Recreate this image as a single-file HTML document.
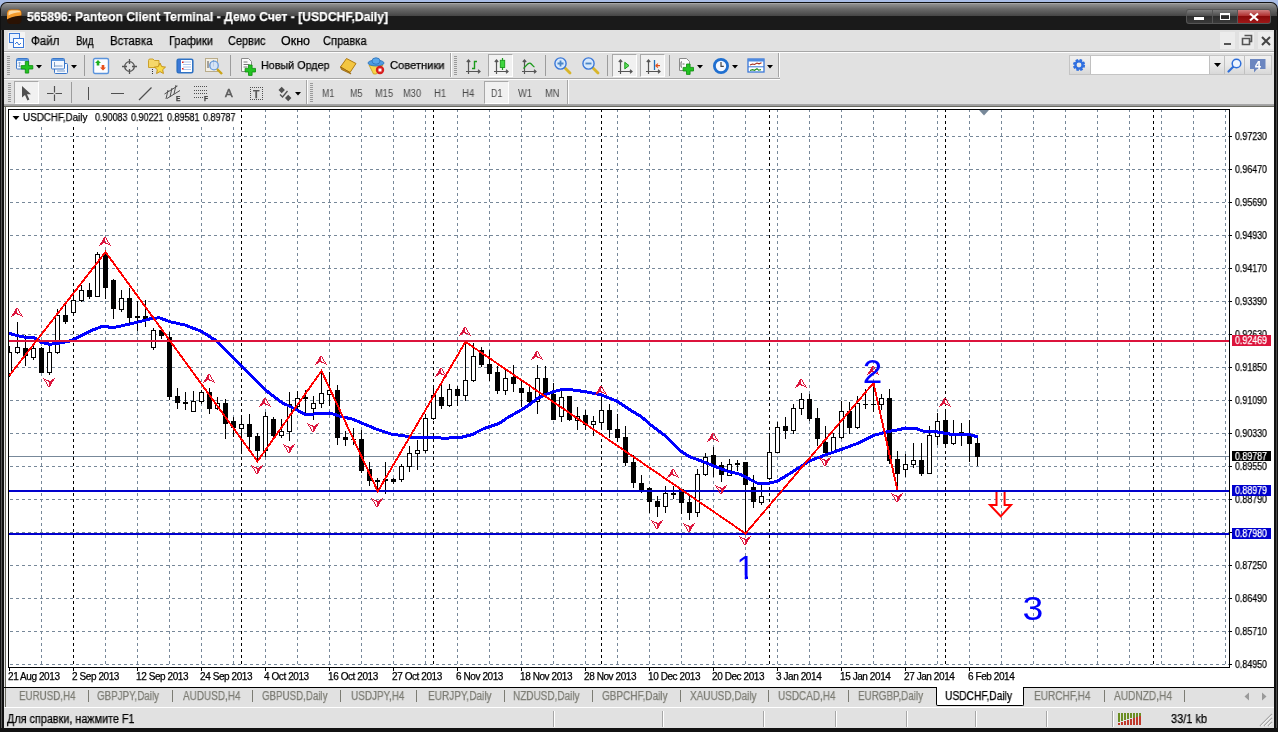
<!DOCTYPE html>
<html><head><meta charset="utf-8"><title>565896: Panteon Client Terminal</title>
<style>
html,body{margin:0;padding:0;background:#111;overflow:hidden}
#w{position:relative;width:1278px;height:732px;overflow:hidden;font-family:"Liberation Sans",sans-serif}
.b{position:absolute;display:block}
.t{position:absolute;white-space:pre;display:block;will-change:transform;-webkit-text-stroke:0.25px}
</style></head><body><div id="w">
<div class="b" style="left:0px;top:0px;width:1278px;height:732px;background:#a9bde6"></div>
<div class="b" style="left:0px;top:2px;width:1278px;height:730px;background:#111;border-radius:7px 7px 0 0"></div>
<div class="b" style="left:1px;top:3px;width:1276px;height:13px;background:linear-gradient(#b4b4b4,#8e8e8e 9%,#6a6a6a 45%,#454545);border-radius:6px 6px 0 0"></div>
<div class="b" style="left:1px;top:12px;width:1px;height:716px;background:#5a5a5a"></div>
<div class="b" style="left:1276px;top:12px;width:1px;height:716px;background:#4a4a4a"></div>
<div class="b" style="left:1px;top:16px;width:1276px;height:14px;background:#1a1a1a"></div>
<div class="b" style="left:4px;top:30px;width:1270px;height:698px;background:#e1e1e1"></div>
<span class="t" style="left:27.0px;top:8.1px;font-size:13px;line-height:17px;color:#fff;transform:scaleX(0.9352);transform-origin:0 50%;font-weight:bold;">565896: Panteon Client Terminal - Демо Счет - [USDCHF,Daily]</span>
<svg class="b" style="left:5px;top:8px" width="18" height="18" viewBox="0 0 18 18" ><path d="M2 5.5Q2 1.500 6 1.500H13Q16.500 1.500 16.500 5V12Q16.500 16 12.500 16H5.500Q2 16 2 12Z" fill="#2b1203"/><path d="M2 5.500Q2 1.500 6 1.500H13Q16.500 1.500 16.500 5V7.500C12 8,5 9,2 11.500Z" fill="#f59a2c"/><path d="M3.500 4.500Q4 2.500 6.500 2.500H12.500Q15 2.500 15.500 4.200C11 4.300,6 5.500,3.500 7.500Z" fill="#fcd9a5"/></svg>
<div class="b" style="left:1186px;top:9px;width:85px;height:15px;background:#555;border-radius:3px"></div>
<div class="b" style="left:1187px;top:10px;width:25px;height:13px;background:linear-gradient(#7c7c7c,#4c4c4c 45%,#2c2c2c 50%,#3a3a3a);border-radius:2px 0 0 2px"></div>
<div class="b" style="left:1213px;top:10px;width:24px;height:13px;background:linear-gradient(#7c7c7c,#4c4c4c 45%,#2c2c2c 50%,#3a3a3a)"></div>
<div class="b" style="left:1238px;top:10px;width:32px;height:13px;background:linear-gradient(#d08080,#b03030 45%,#8a0a0a 50%,#a01818);border-radius:0 2px 2px 0"></div>
<div class="b" style="left:1194px;top:17px;width:10px;height:3px;background:#fff"></div>
<div class="b" style="left:1220px;top:13px;width:10px;height:7px;border:1.5px solid #fff;border-top-width:2.5px;box-sizing:border-box"></div>
<svg class="b" style="left:1247px;top:12px" width="14" height="10" viewBox="0 0 14 10" ><path d="M3 1.5L11 8.5M11 1.5L3 8.5" stroke="#fff" stroke-width="2.2"/></svg>
<div class="b" style="left:4px;top:51px;width:1270px;height:1px;background:#a6a6a6"></div>
<div class="b" style="left:4px;top:52px;width:1270px;height:1px;background:#fdfdfd"></div>
<div class="b" style="left:8px;top:32px;width:17px;height:17px;background:#f4f4f4"></div>
<svg class="b" style="left:9px;top:33px" width="16" height="16" viewBox="0 0 16 16" ><rect x="0.5" y="0.5" width="10" height="9" fill="#eaf2ff" stroke="#3b78d8"/><rect x="4.5" y="5.5" width="10" height="9" fill="#fff" stroke="#3b78d8"/><path d="M6 11l2-2 2 3 2-2" stroke="#3b78d8" fill="none"/></svg>
<span class="t" style="left:31.0px;top:32.5px;font-size:12px;line-height:16px;color:#000;transform:scaleX(0.9661);transform-origin:0 50%;">Файл</span>
<span class="t" style="left:75.5px;top:32.5px;font-size:12px;line-height:16px;color:#000;transform:scaleX(0.8061);transform-origin:0 50%;">Вид</span>
<span class="t" style="left:110.0px;top:32.5px;font-size:12px;line-height:16px;color:#000;transform:scaleX(0.9528);transform-origin:0 50%;">Вставка</span>
<span class="t" style="left:168.5px;top:32.5px;font-size:12px;line-height:16px;color:#000;transform:scaleX(0.9224);transform-origin:0 50%;">Графики</span>
<span class="t" style="left:227.5px;top:32.5px;font-size:12px;line-height:16px;color:#000;transform:scaleX(0.9126);transform-origin:0 50%;">Сервис</span>
<span class="t" style="left:281.0px;top:32.5px;font-size:12px;line-height:16px;color:#000;transform:scaleX(1.0400);transform-origin:0 50%;">Окно</span>
<span class="t" style="left:322.5px;top:32.5px;font-size:12px;line-height:16px;color:#000;transform:scaleX(0.9241);transform-origin:0 50%;">Справка</span>
<div class="b" style="left:1220px;top:32px;width:15px;height:17px;background:#ececec"></div>
<div class="b" style="left:1239px;top:32px;width:15px;height:17px;background:#ececec"></div>
<div class="b" style="left:1258px;top:32px;width:15px;height:17px;background:#ececec"></div>
<div class="b" style="left:1224px;top:43px;width:7px;height:2px;background:#555"></div>
<svg class="b" style="left:1241px;top:34px" width="13" height="13" viewBox="0 0 13 13" ><path d="M3.5 1.5h7v6h-2M1.5 4.5h7v6h-7z" stroke="#555" stroke-width="1.6" fill="none"/></svg>
<svg class="b" style="left:1260px;top:35px" width="12" height="12" viewBox="0 0 12 12" ><path d="M2 2L10 10M10 2L2 10" stroke="#444" stroke-width="2"/></svg>
<div class="b" style="left:4px;top:78px;width:776px;height:1px;background:#a6a6a6"></div>
<div class="b" style="left:4px;top:79px;width:776px;height:1px;background:#fdfdfd"></div>
<div class="b" style="left:7px;top:56px;width:3px;height:1px;background:#9a9a9a"></div>
<div class="b" style="left:7px;top:58px;width:3px;height:1px;background:#9a9a9a"></div>
<div class="b" style="left:7px;top:60px;width:3px;height:1px;background:#9a9a9a"></div>
<div class="b" style="left:7px;top:62px;width:3px;height:1px;background:#9a9a9a"></div>
<div class="b" style="left:7px;top:64px;width:3px;height:1px;background:#9a9a9a"></div>
<div class="b" style="left:7px;top:66px;width:3px;height:1px;background:#9a9a9a"></div>
<div class="b" style="left:7px;top:68px;width:3px;height:1px;background:#9a9a9a"></div>
<div class="b" style="left:7px;top:70px;width:3px;height:1px;background:#9a9a9a"></div>
<div class="b" style="left:7px;top:72px;width:3px;height:1px;background:#9a9a9a"></div>
<div class="b" style="left:7px;top:74px;width:3px;height:1px;background:#9a9a9a"></div>
<svg class="b" style="left:15px;top:57px" width="20" height="18" viewBox="0 0 20 18" ><rect x="1.5" y="1.5" width="12" height="10.5" rx="1" fill="#f4f8ff" stroke="#3a77c9"/><rect x="2" y="2" width="11" height="2" fill="#5c97e0"/><path d="M4.5 5v5M3 6.5l1.5-1.5 1.5 1.5M3 8.5l1.5 1.5 1.5-1.5" stroke="#7a9cc8" fill="none" stroke-width=".8"/><path d="M10.300 4.500h3.400v4.100h4.100v3.400h-4.100v4.100h-3.400v-4.100H6.200v-3.400h4.100z" fill="#22c322" stroke="#0b8a0b" stroke-width=".8"/></svg>
<svg class="b" style="left:36px;top:65px" width="6" height="4" viewBox="0 0 6 4" ><path d="M0 0H6L3 3.5Z" fill="#000"/></svg>
<svg class="b" style="left:50px;top:57px" width="20" height="18" viewBox="0 0 20 18" ><rect x="4.5" y="6.5" width="13" height="10" rx="1" fill="#f4f8ff" stroke="#3a77c9"/><path d="M7 14h8" stroke="#7a9cc8" stroke-width="1"/><rect x="1.5" y="1.5" width="13" height="10.5" rx="1" fill="#f4f8ff" stroke="#3a77c9"/><rect x="2" y="2" width="12" height="2" fill="#5c97e0"/><path d="M4.500 5v5M4.500 9h8" stroke="#7a9cc8" fill="none" stroke-width="1"/></svg>
<svg class="b" style="left:71px;top:65px" width="6" height="4" viewBox="0 0 6 4" ><path d="M0 0H6L3 3.5Z" fill="#000"/></svg>
<div class="b" style="left:84px;top:55px;width:1px;height:21px;background:#9c9c9c"></div>
<svg class="b" style="left:92px;top:57px" width="18" height="18" viewBox="0 0 18 18" ><rect x="1.5" y="1.5" width="15" height="15" rx="1.5" fill="#fcfdff" stroke="#5a93dc" stroke-width="1.4"/><path d="M6 3l3 3H7.3v2.5H4.7V6H3z" fill="#1fb01f"/><path d="M11 13.5l-3-3h1.7V8h2.6v2.5H14z" fill="#e8501a"/></svg>
<svg class="b" style="left:121px;top:58px" width="18" height="18" viewBox="0 0 18 18" ><circle cx="8.5" cy="8.5" r="4.8" fill="none" stroke="#555" stroke-width="1.3"/><path d="M8.5 1v5M8.5 11v5M1 8.5h5M11 8.5h5" stroke="#555" stroke-width="1.3"/></svg>
<svg class="b" style="left:147px;top:56px" width="20" height="20" viewBox="0 0 20 20" ><path d="M1.5 4.5q0-1.5 1.5-1.5h3l1.5 1.5h4.5v7h-10.5z" fill="#f5d76a" stroke="#c79a1d" stroke-width=".9"/><path d="M13 7l1.7 3.6 3.8.5-2.8 2.6.7 3.8-3.4-1.9-3.4 1.9.7-3.8-2.8-2.6 3.8-.5z" fill="#f9dc4a" stroke="#c08a10" stroke-width=".9"/><path d="M5.5 13v5" stroke="#333" stroke-dasharray="1 1"/></svg>
<svg class="b" style="left:176px;top:58px" width="18" height="17" viewBox="0 0 18 17" ><rect x="1.2" y="1.2" width="15.6" height="13.6" rx="1.5" fill="#fff" stroke="#2f72c4" stroke-width="1.6"/><rect x="2" y="2" width="3" height="12" fill="#3b78d8"/><path d="M7 4h8M7 6.5h8M7 9h8M7 11.500h8" stroke="#9bb8e8" stroke-width=".8"/><rect x="6" y="3.500" width="1.500" height="1.500" fill="#e02020"/><rect x="6" y="10" width="1.500" height="1.500" fill="#e02020"/></svg>
<svg class="b" style="left:204px;top:57px" width="20" height="19" viewBox="0 0 20 19" ><rect x="1.5" y="1.5" width="12" height="13" fill="#f3efe4" stroke="#b9ac8a"/><path d="M4 4v7M6.500 5v6M9.500 3.500v6" stroke="#555" stroke-width="1"/><circle cx="10" cy="8.500" r="4.300" fill="#cfe2fa" fill-opacity=".85" stroke="#6d9fdf" stroke-width="1.300"/><path d="M13 12l5 5" stroke="#caa41a" stroke-width="2.400"/></svg>
<div class="b" style="left:230px;top:55px;width:1px;height:21px;background:#9c9c9c"></div>
<svg class="b" style="left:239px;top:57px" width="19" height="19" viewBox="0 0 19 19" ><path d="M2.500 1.500h7l3 3v10h-10z" fill="#fbfbfb" stroke="#8a8a8a"/><path d="M4.500 5h4M4.500 7.500h6M4.500 10h4" stroke="#777" stroke-width="1"/><path d="M9.500 8h3.600v3.400h3.400v3.600h-3.400v3.400H9.500V15H6.100v-3.600h3.400z" fill="#22c322" stroke="#0b8a0b" stroke-width=".8"/></svg>
<span class="t" style="left:260.5px;top:58.2px;font-size:11.5px;line-height:15.5px;color:#000;transform:scaleX(0.9349);transform-origin:0 50%;">Новый Ордер</span>
<svg class="b" style="left:339px;top:57px" width="19" height="18" viewBox="0 0 19 18" ><path d="M1.500 10l6-8.500 9.500 5-6 9z" fill="#f3c641" stroke="#b07a10" stroke-width="1"/><path d="M1.500 10l1 2.500 9.500 4.500-1-1.500z" fill="#c98f1c" stroke="#8a5a08" stroke-width=".7"/></svg>
<svg class="b" style="left:366px;top:56px" width="20" height="20" viewBox="0 0 20 20" ><path d="M3 9h14l-6.500 9h-3z" fill="#f6d44a" stroke="#c79a1d" stroke-width=".8"/><ellipse cx="10" cy="7" rx="8" ry="3" fill="#4d9be0" stroke="#2a6fb8" stroke-width=".8"/><ellipse cx="10" cy="5" rx="4" ry="3.200" fill="#5aa7ea" stroke="#2a6fb8" stroke-width=".8"/><circle cx="14" cy="14" r="4.200" fill="#d81e1e"/><rect x="12.500" y="12.500" width="3" height="3" fill="#fff"/></svg>
<span class="t" style="left:390.0px;top:58.2px;font-size:11.5px;line-height:15.5px;color:#000;transform:scaleX(0.9699);transform-origin:0 50%;">Советники</span>
<div class="b" style="left:450px;top:53px;width:1px;height:24px;background:#a6a6a6"></div>
<div class="b" style="left:451px;top:53px;width:1px;height:24px;background:#fdfdfd"></div>
<div class="b" style="left:454px;top:56px;width:3px;height:1px;background:#9a9a9a"></div>
<div class="b" style="left:454px;top:58px;width:3px;height:1px;background:#9a9a9a"></div>
<div class="b" style="left:454px;top:60px;width:3px;height:1px;background:#9a9a9a"></div>
<div class="b" style="left:454px;top:62px;width:3px;height:1px;background:#9a9a9a"></div>
<div class="b" style="left:454px;top:64px;width:3px;height:1px;background:#9a9a9a"></div>
<div class="b" style="left:454px;top:66px;width:3px;height:1px;background:#9a9a9a"></div>
<div class="b" style="left:454px;top:68px;width:3px;height:1px;background:#9a9a9a"></div>
<div class="b" style="left:454px;top:70px;width:3px;height:1px;background:#9a9a9a"></div>
<div class="b" style="left:454px;top:72px;width:3px;height:1px;background:#9a9a9a"></div>
<div class="b" style="left:454px;top:74px;width:3px;height:1px;background:#9a9a9a"></div>
<svg class="b" style="left:465px;top:58px" width="17" height="17" viewBox="0 0 17 17" ><path d="M3.500 2v14M1 13.500h14M1.800 4l1.700-2 1.700 2M13 11.800l2 1.700-2 1.700" stroke="#555" stroke-width="1.200" fill="none"/><path d="M7 10.500h2.500v-7H12" stroke="#1a9a1a" stroke-width="1.400" fill="none"/></svg>
<div class="b" style="left:488px;top:54px;width:25px;height:23px;background:#f1f1f1;box-sizing:border-box;border:1px solid;border-color:#a8a8a8 #fff #fff #a8a8a8"></div>
<svg class="b" style="left:493px;top:58px" width="17" height="17" viewBox="0 0 17 17" ><path d="M3.500 2v14M1 13.500h14M1.800 4l1.700-2 1.700 2M13 11.800l2 1.700-2 1.700" stroke="#555" stroke-width="1.200" fill="none"/><path d="M9.500 0v12" stroke="#1a9a1a" stroke-width="1.200"/><rect x="7.300" y="2.300" width="4.400" height="7.200" fill="#3fd63f" stroke="#1a9a1a" stroke-width=".9"/></svg>
<svg class="b" style="left:521px;top:58px" width="17" height="17" viewBox="0 0 17 17" ><path d="M3.500 2v14M1 13.500h14M1.800 4l1.700-2 1.700 2M13 11.800l2 1.700-2 1.700" stroke="#555" stroke-width="1.200" fill="none"/><path d="M2.500 10.500C5 8,7 4.500,9 5.200S12 8.500,13.500 9" stroke="#1a9a1a" stroke-width="1.300" fill="none"/></svg>
<div class="b" style="left:545px;top:55px;width:1px;height:21px;background:#9c9c9c"></div>
<svg class="b" style="left:551.5px;top:55px" width="20" height="20" viewBox="0 0 20 20" ><path d="M12.500 12.500l5.500 5.500" stroke="#d8b52a" stroke-width="2.800" stroke-linecap="round"/><circle cx="8.500" cy="8.500" r="5.600" fill="#d6e8fb" stroke="#3b78d8" stroke-width="1.400"/><path d="M5.500 8.500h6M8.500 5.500v6" stroke="#4a86c8" stroke-width="1.800"/></svg>
<svg class="b" style="left:579.7px;top:55px" width="20" height="20" viewBox="0 0 20 20" ><path d="M12.500 12.500l5.500 5.500" stroke="#d8b52a" stroke-width="2.800" stroke-linecap="round"/><circle cx="8.500" cy="8.500" r="5.600" fill="#d6e8fb" stroke="#3b78d8" stroke-width="1.400"/><path d="M5.500 8.500h6" stroke="#4a86c8" stroke-width="1.800"/></svg>
<div class="b" style="left:607px;top:55px;width:1px;height:21px;background:#9c9c9c"></div>
<div class="b" style="left:612px;top:54px;width:25px;height:23px;background:#f1f1f1;box-sizing:border-box;border:1px solid;border-color:#a8a8a8 #fff #fff #a8a8a8"></div>
<svg class="b" style="left:617px;top:58px" width="17" height="17" viewBox="0 0 17 17" ><path d="M3.500 2v14M1 13.500h14M1.800 4l1.700-2 1.700 2M13 11.800l2 1.700-2 1.700" stroke="#555" stroke-width="1.200" fill="none"/><path d="M7.800 4.300v6.600l4.200-3.300z" fill="#5fe05f" stroke="#1a9a1a" stroke-width="1"/></svg>
<div class="b" style="left:640px;top:54px;width:25px;height:23px;background:#f1f1f1;box-sizing:border-box;border:1px solid;border-color:#a8a8a8 #fff #fff #a8a8a8"></div>
<svg class="b" style="left:645px;top:58px" width="17" height="17" viewBox="0 0 17 17" ><path d="M3.500 2v14M1 13.500h14M1.800 4l1.700-2 1.700 2M13 11.800l2 1.700-2 1.700" stroke="#555" stroke-width="1.200" fill="none"/><path d="M9.500 2v10" stroke="#1f6fb8" stroke-width="1.300"/><path d="M10.500 7.600h4.500M10.500 7.600l2.500-2M10.500 7.600l2.500 2" stroke="#e0501a" stroke-width="1.200" fill="none"/></svg>
<div class="b" style="left:669px;top:55px;width:1px;height:21px;background:#9c9c9c"></div>
<svg class="b" style="left:678px;top:57px" width="19" height="20" viewBox="0 0 19 20" ><path d="M1.500 1.500h7l3 3v9h-10z" fill="#fbfbfb" stroke="#8a8a8a"/><path d="M4 4.500q-1 0-1 1.500v3q0 1.500 1 1.500M4.500 7h2" stroke="#555" fill="none" stroke-width=".9"/><path d="M8.500 7h3.600v3.400h3.400v3.600h-3.400v3.400H8.500V14H5.100v-3.600h3.400z" fill="#22c322" stroke="#0b8a0b" stroke-width=".8"/></svg>
<svg class="b" style="left:697px;top:65px" width="6" height="4" viewBox="0 0 6 4" ><path d="M0 0H6L3 3.5Z" fill="#000"/></svg>
<svg class="b" style="left:712px;top:57px" width="18" height="18" viewBox="0 0 18 18" ><circle cx="9" cy="9" r="6.600" fill="#f4f8ff" stroke="#1f6fd0" stroke-width="2.800"/><path d="M9 5V9.300h2.800" stroke="#444" stroke-width="1.200" fill="none"/></svg>
<svg class="b" style="left:732px;top:65px" width="6" height="4" viewBox="0 0 6 4" ><path d="M0 0H6L3 3.5Z" fill="#000"/></svg>
<svg class="b" style="left:747px;top:58px" width="18" height="15" viewBox="0 0 18 15" ><rect x="1" y="1" width="16" height="13" fill="#fff" stroke="#3b78d8" stroke-width="1.300"/><rect x="1" y="1" width="16" height="2.500" fill="#4d8ae0"/><path d="M1 8.800h16" stroke="#3b78d8" stroke-width="1"/><path d="M3 7l2.500-1 2 .5 2.500-1.500 2 .8 2.500-1" stroke="#a52a1a" fill="none" stroke-width="1.100"/><path d="M3 12.500l2.500-.8 2 .6 2.500-1.600 1.500 1.500 2.500-.6" stroke="#1a8a1a" fill="none" stroke-width="1.100"/></svg>
<svg class="b" style="left:767px;top:65px" width="6" height="4" viewBox="0 0 6 4" ><path d="M0 0H6L3 3.5Z" fill="#000"/></svg>
<div class="b" style="left:778px;top:53px;width:1px;height:24px;background:#a6a6a6"></div>
<div class="b" style="left:779px;top:53px;width:1px;height:24px;background:#fdfdfd"></div>
<div class="b" style="left:1069px;top:55px;width:203px;height:20px;background:linear-gradient(#f0f0f0,#e9e9e9 50%,#d8d8d8);border:1px solid #c4c4c4;box-sizing:border-box"></div>
<div class="b" style="left:1090px;top:56px;width:120px;height:18px;background:#fff;border-left:1px solid #c0c0c0;border-right:1px solid #c0c0c0;box-sizing:border-box"></div>
<svg class="b" style="left:1071px;top:57px" width="16" height="16" viewBox="0 0 16 16" ><circle cx="8" cy="8" r="4.600" fill="none" stroke="#2f6fe0" stroke-width="3" stroke-dasharray="2.300 1.310"/><circle cx="8" cy="8" r="3.600" fill="none" stroke="#2f6fe0" stroke-width="2.400"/></svg>
<div class="b" style="left:1224px;top:56px;width:1px;height:18px;background:#c0c0c0"></div>
<div class="b" style="left:1244px;top:56px;width:1px;height:18px;background:#c0c0c0"></div>
<svg class="b" style="left:1214px;top:63px" width="8" height="5" viewBox="0 0 8 5" ><path d="M0 0H7L3.500 4Z" fill="#000"/></svg>
<svg class="b" style="left:1226px;top:57px" width="17" height="17" viewBox="0 0 17 17" ><path d="M2.500 14.500l5-5" stroke="#2f6fd8" stroke-width="2.200" stroke-linecap="round"/><circle cx="10.500" cy="6.500" r="4.300" fill="#eef5ff" stroke="#2f6fd8" stroke-width="1.500"/></svg>
<svg class="b" style="left:1249px;top:58px" width="18" height="15" viewBox="0 0 18 15" ><path d="M1 1h15.500v10H8l-3 3.500V11H1z" fill="#6b86c0"/></svg>
<span class="t" style="left:1254.6px;top:57.5px;font-size:10.5px;line-height:14.5px;color:#fff;font-weight:bold;">4</span>
<div class="b" style="left:4px;top:104px;width:1270px;height:1px;background:#a6a6a6"></div>
<div class="b" style="left:8px;top:83px;width:3px;height:1px;background:#9a9a9a"></div>
<div class="b" style="left:8px;top:85px;width:3px;height:1px;background:#9a9a9a"></div>
<div class="b" style="left:8px;top:87px;width:3px;height:1px;background:#9a9a9a"></div>
<div class="b" style="left:8px;top:89px;width:3px;height:1px;background:#9a9a9a"></div>
<div class="b" style="left:8px;top:91px;width:3px;height:1px;background:#9a9a9a"></div>
<div class="b" style="left:8px;top:93px;width:3px;height:1px;background:#9a9a9a"></div>
<div class="b" style="left:8px;top:95px;width:3px;height:1px;background:#9a9a9a"></div>
<div class="b" style="left:8px;top:97px;width:3px;height:1px;background:#9a9a9a"></div>
<div class="b" style="left:8px;top:99px;width:3px;height:1px;background:#9a9a9a"></div>
<div class="b" style="left:8px;top:101px;width:3px;height:1px;background:#9a9a9a"></div>
<div class="b" style="left:14px;top:81px;width:25px;height:23px;background:#f1f1f1;box-sizing:border-box;border:1px solid;border-color:#a8a8a8 #fff #fff #a8a8a8"></div>
<svg class="b" style="left:20px;top:85px" width="12" height="17" viewBox="0 0 12 17" ><path d="M2 1v11.500l3-2.600 2.400 5.600 2-0.900-2.400-5.400h4z" fill="#505050"/></svg>
<svg class="b" style="left:46px;top:85px" width="17" height="17" viewBox="0 0 17 17" ><path d="M8.500 1v6.500M8.500 9.500v6.500M1 8.500h6.500M9.500 8.500h6.500" stroke="#505050" stroke-width="1.200"/></svg>
<div class="b" style="left:71px;top:82px;width:1px;height:21px;background:#9c9c9c"></div>
<div class="b" style="left:88px;top:87px;width:1px;height:13px;background:#505050"></div>
<div class="b" style="left:111px;top:93px;width:13px;height:1px;background:#505050"></div>
<svg class="b" style="left:137px;top:86px" width="16" height="16" viewBox="0 0 16 16" ><path d="M2 14L14.500 1.500" stroke="#505050" stroke-width="1.200"/></svg>
<svg class="b" style="left:163px;top:84px" width="19" height="19" viewBox="0 0 19 19" ><path d="M1.500 10l13-8M4 14.500l13-8M3 15l2-9M7 13l2-9M11 10l2-9" stroke="#505050" stroke-width="1" fill="none"/></svg>
<span class="t" style="left:175.6px;top:94.2px;font-size:6.5px;line-height:10.5px;color:#404040;font-weight:bold;">E</span>
<div class="b" style="left:194px;top:86px;width:14px;height:1px;background:repeating-linear-gradient(90deg,#505050 0 1px,transparent 1px 2px)"></div>
<div class="b" style="left:194px;top:90px;width:14px;height:1px;background:repeating-linear-gradient(90deg,#505050 0 1px,transparent 1px 2px)"></div>
<div class="b" style="left:194px;top:93px;width:14px;height:1px;background:repeating-linear-gradient(90deg,#505050 0 1px,transparent 1px 2px)"></div>
<div class="b" style="left:194px;top:97px;width:9px;height:1px;background:repeating-linear-gradient(90deg,#505050 0 1px,transparent 1px 2px)"></div>
<span class="t" style="left:203.8px;top:94.2px;font-size:6.5px;line-height:10.5px;color:#404040;font-weight:bold;">F</span>
<span class="t" style="left:224.8px;top:85.8px;font-size:11.5px;line-height:15.5px;color:#5a5a5a;-webkit-text-stroke:0.5px;">A</span>
<div class="b" style="left:250px;top:87px;width:13px;height:13px;border:1px dotted #505050;box-sizing:border-box"></div>
<span class="t" style="left:252.8px;top:86.5px;font-size:10.5px;line-height:14.5px;color:#5a5a5a;font-weight:bold;">T</span>
<svg class="b" style="left:277px;top:86px" width="16" height="16" viewBox="0 0 16 16" ><path d="M1.500 4l3.200-3.200L7.900 4 4.700 7.200zM8 12l3.200-3.200L14.400 12l-3.200 3.200z" fill="#505050"/><path d="M3 8.500l2.500 2.500 5-6" stroke="#505050" stroke-width="1.300" fill="none"/></svg>
<svg class="b" style="left:294.5px;top:92px" width="6" height="4" viewBox="0 0 6 4" ><path d="M0 0H6L3 3.5Z" fill="#000"/></svg>
<div class="b" style="left:306px;top:80px;width:1px;height:24px;background:#a6a6a6"></div>
<div class="b" style="left:307px;top:80px;width:1px;height:24px;background:#fdfdfd"></div>
<div class="b" style="left:310px;top:83px;width:3px;height:1px;background:#9a9a9a"></div>
<div class="b" style="left:310px;top:85px;width:3px;height:1px;background:#9a9a9a"></div>
<div class="b" style="left:310px;top:87px;width:3px;height:1px;background:#9a9a9a"></div>
<div class="b" style="left:310px;top:89px;width:3px;height:1px;background:#9a9a9a"></div>
<div class="b" style="left:310px;top:91px;width:3px;height:1px;background:#9a9a9a"></div>
<div class="b" style="left:310px;top:93px;width:3px;height:1px;background:#9a9a9a"></div>
<div class="b" style="left:310px;top:95px;width:3px;height:1px;background:#9a9a9a"></div>
<div class="b" style="left:310px;top:97px;width:3px;height:1px;background:#9a9a9a"></div>
<div class="b" style="left:310px;top:99px;width:3px;height:1px;background:#9a9a9a"></div>
<div class="b" style="left:310px;top:101px;width:3px;height:1px;background:#9a9a9a"></div>
<div class="b" style="left:484px;top:81px;width:25px;height:23px;background:#f1f1f1;box-sizing:border-box;border:1px solid;border-color:#a8a8a8 #fff #fff #a8a8a8"></div>
<span class="t" style="left:321.7px;top:86.6px;font-size:10px;line-height:14px;color:#484848;transform:scaleX(0.8855);transform-origin:0 50%;-webkit-text-stroke:0;">M1</span>
<span class="t" style="left:349.5px;top:86.6px;font-size:10px;line-height:14px;color:#484848;transform:scaleX(0.8999);transform-origin:0 50%;-webkit-text-stroke:0;">M5</span>
<span class="t" style="left:375.0px;top:86.6px;font-size:10px;line-height:14px;color:#484848;transform:scaleX(0.9254);transform-origin:0 50%;-webkit-text-stroke:0;">M15</span>
<span class="t" style="left:403.0px;top:86.6px;font-size:10px;line-height:14px;color:#484848;transform:scaleX(0.9254);transform-origin:0 50%;-webkit-text-stroke:0;">M30</span>
<span class="t" style="left:434.0px;top:86.6px;font-size:10px;line-height:14px;color:#484848;transform:scaleX(0.9388);transform-origin:0 50%;-webkit-text-stroke:0;">H1</span>
<span class="t" style="left:461.6px;top:86.6px;font-size:10px;line-height:14px;color:#484848;transform:scaleX(0.9544);transform-origin:0 50%;-webkit-text-stroke:0;">H4</span>
<span class="t" style="left:490.7px;top:86.6px;font-size:10px;line-height:14px;color:#484848;transform:scaleX(0.8840);transform-origin:0 50%;-webkit-text-stroke:0;">D1</span>
<span class="t" style="left:518.0px;top:86.6px;font-size:10px;line-height:14px;color:#484848;transform:scaleX(0.9333);transform-origin:0 50%;-webkit-text-stroke:0;">W1</span>
<span class="t" style="left:544.7px;top:86.6px;font-size:10px;line-height:14px;color:#484848;transform:scaleX(0.9324);transform-origin:0 50%;-webkit-text-stroke:0;">MN</span>
<div class="b" style="left:567px;top:80px;width:1px;height:24px;background:#a6a6a6"></div>
<div class="b" style="left:568px;top:80px;width:1px;height:24px;background:#fdfdfd"></div>
<div class="b" style="left:4px;top:105px;width:1270px;height:1px;background:#a0a0a0"></div>
<div class="b" style="left:4px;top:106px;width:1270px;height:1px;background:#696960"></div>
<div class="b" style="left:5px;top:107px;width:1269px;height:580px;background:#fff"></div>
<div class="b" style="left:5px;top:107px;width:1px;height:580px;background:#696960"></div>
<svg class="b" style="left:0;top:0" width="1278" height="732" viewBox="0 0 1278 732"><defs><clipPath id="cc"><rect x="9" y="110" width="1220" height="557"/></clipPath></defs><g clip-path="url(#cc)"><g shape-rendering="crispEdges"><path d="M10 136.5H1229" stroke="#778899" stroke-dasharray="3 3" fill="none"/><path d="M10 169.5H1229" stroke="#778899" stroke-dasharray="3 3" fill="none"/><path d="M10 202.5H1229" stroke="#778899" stroke-dasharray="3 3" fill="none"/><path d="M10 235.5H1229" stroke="#778899" stroke-dasharray="3 3" fill="none"/><path d="M10 268.5H1229" stroke="#778899" stroke-dasharray="3 3" fill="none"/><path d="M10 301.5H1229" stroke="#778899" stroke-dasharray="3 3" fill="none"/><path d="M10 334.5H1229" stroke="#778899" stroke-dasharray="3 3" fill="none"/><path d="M10 367.5H1229" stroke="#778899" stroke-dasharray="3 3" fill="none"/><path d="M10 400.5H1229" stroke="#778899" stroke-dasharray="3 3" fill="none"/><path d="M10 433.5H1229" stroke="#778899" stroke-dasharray="3 3" fill="none"/><path d="M10 466.5H1229" stroke="#778899" stroke-dasharray="3 3" fill="none"/><path d="M10 499.5H1229" stroke="#778899" stroke-dasharray="3 3" fill="none"/><path d="M10 532.5H1229" stroke="#778899" stroke-dasharray="3 3" fill="none"/><path d="M10 565.5H1229" stroke="#778899" stroke-dasharray="3 3" fill="none"/><path d="M10 598.5H1229" stroke="#778899" stroke-dasharray="3 3" fill="none"/><path d="M10 631.5H1229" stroke="#778899" stroke-dasharray="3 3" fill="none"/><path d="M10 664.5H1229" stroke="#778899" stroke-dasharray="3 3" fill="none"/><path d="M41.5 109V667" stroke="#778899" stroke-dasharray="3 3" fill="none"/><path d="M105.5 109V667" stroke="#778899" stroke-dasharray="3 3" fill="none"/><path d="M137.5 109V667" stroke="#778899" stroke-dasharray="3 3" fill="none"/><path d="M169.5 109V667" stroke="#778899" stroke-dasharray="3 3" fill="none"/><path d="M201.5 109V667" stroke="#778899" stroke-dasharray="3 3" fill="none"/><path d="M233.5 109V667" stroke="#778899" stroke-dasharray="3 3" fill="none"/><path d="M265.5 109V667" stroke="#778899" stroke-dasharray="3 3" fill="none"/><path d="M297.5 109V667" stroke="#778899" stroke-dasharray="3 3" fill="none"/><path d="M329.5 109V667" stroke="#778899" stroke-dasharray="3 3" fill="none"/><path d="M361.5 109V667" stroke="#778899" stroke-dasharray="3 3" fill="none"/><path d="M393.5 109V667" stroke="#778899" stroke-dasharray="3 3" fill="none"/><path d="M425.5 109V667" stroke="#778899" stroke-dasharray="3 3" fill="none"/><path d="M457.5 109V667" stroke="#778899" stroke-dasharray="3 3" fill="none"/><path d="M489.5 109V667" stroke="#778899" stroke-dasharray="3 3" fill="none"/><path d="M521.5 109V667" stroke="#778899" stroke-dasharray="3 3" fill="none"/><path d="M553.5 109V667" stroke="#778899" stroke-dasharray="3 3" fill="none"/><path d="M585.5 109V667" stroke="#778899" stroke-dasharray="3 3" fill="none"/><path d="M617.5 109V667" stroke="#778899" stroke-dasharray="3 3" fill="none"/><path d="M649.5 109V667" stroke="#778899" stroke-dasharray="3 3" fill="none"/><path d="M681.5 109V667" stroke="#778899" stroke-dasharray="3 3" fill="none"/><path d="M713.5 109V667" stroke="#778899" stroke-dasharray="3 3" fill="none"/><path d="M745.5 109V667" stroke="#778899" stroke-dasharray="3 3" fill="none"/><path d="M777.5 109V667" stroke="#778899" stroke-dasharray="3 3" fill="none"/><path d="M809.5 109V667" stroke="#778899" stroke-dasharray="3 3" fill="none"/><path d="M841.5 109V667" stroke="#778899" stroke-dasharray="3 3" fill="none"/><path d="M873.5 109V667" stroke="#778899" stroke-dasharray="3 3" fill="none"/><path d="M905.5 109V667" stroke="#778899" stroke-dasharray="3 3" fill="none"/><path d="M937.5 109V667" stroke="#778899" stroke-dasharray="3 3" fill="none"/><path d="M969.5 109V667" stroke="#778899" stroke-dasharray="3 3" fill="none"/><path d="M1001.5 109V667" stroke="#778899" stroke-dasharray="3 3" fill="none"/><path d="M1033.5 109V667" stroke="#778899" stroke-dasharray="3 3" fill="none"/><path d="M1065.5 109V667" stroke="#778899" stroke-dasharray="3 3" fill="none"/><path d="M1097.5 109V667" stroke="#778899" stroke-dasharray="3 3" fill="none"/><path d="M1129.5 109V667" stroke="#778899" stroke-dasharray="3 3" fill="none"/><path d="M1161.5 109V667" stroke="#778899" stroke-dasharray="3 3" fill="none"/><path d="M1193.5 109V667" stroke="#778899" stroke-dasharray="3 3" fill="none"/><path d="M1225.5 109V667" stroke="#778899" stroke-dasharray="3 3" fill="none"/><path d="M73.5 109V667" stroke="#000" stroke-dasharray="3 3" fill="none"/><path d="M241.5 109V667" stroke="#000" stroke-dasharray="3 3" fill="none"/><path d="M433.5 109V667" stroke="#000" stroke-dasharray="3 3" fill="none"/><path d="M601.5 109V667" stroke="#000" stroke-dasharray="3 3" fill="none"/><path d="M769.5 109V667" stroke="#000" stroke-dasharray="3 3" fill="none"/><path d="M945.5 109V667" stroke="#000" stroke-dasharray="3 3" fill="none"/><path d="M1153.5 109V667" stroke="#000" stroke-dasharray="3 3" fill="none"/><rect x="9" y="456" width="1220" height="1" fill="#778899"/><rect x="9" y="346" width="1" height="31" fill="#000"/><rect x="7" y="352" width="5" height="22" fill="#000"/><rect x="8" y="353" width="3" height="20" fill="#fff"/><rect x="17" y="322" width="1" height="32" fill="#000"/><rect x="15" y="347" width="5" height="6" fill="#000"/><rect x="16" y="348" width="3" height="4" fill="#fff"/><rect x="25" y="335" width="1" height="31" fill="#000"/><rect x="23" y="348" width="5" height="8" fill="#000"/><rect x="33" y="346" width="1" height="14" fill="#000"/><rect x="31" y="348" width="5" height="10" fill="#000"/><rect x="32" y="349" width="3" height="8" fill="#fff"/><rect x="41" y="347" width="1" height="26" fill="#000"/><rect x="39" y="348" width="5" height="25" fill="#000"/><rect x="49" y="346" width="1" height="29" fill="#000"/><rect x="47" y="352" width="5" height="21" fill="#000"/><rect x="48" y="353" width="3" height="19" fill="#fff"/><rect x="57" y="309" width="1" height="45" fill="#000"/><rect x="55" y="315" width="5" height="38" fill="#000"/><rect x="56" y="316" width="3" height="36" fill="#fff"/><rect x="65" y="304" width="1" height="20" fill="#000"/><rect x="63" y="315" width="5" height="7" fill="#000"/><rect x="73" y="295" width="1" height="20" fill="#000"/><rect x="71" y="300" width="5" height="13" fill="#000"/><rect x="72" y="301" width="3" height="11" fill="#fff"/><rect x="81" y="285" width="1" height="17" fill="#000"/><rect x="79" y="290" width="5" height="11" fill="#000"/><rect x="80" y="291" width="3" height="9" fill="#fff"/><rect x="89" y="283" width="1" height="16" fill="#000"/><rect x="87" y="290" width="5" height="7" fill="#000"/><rect x="97" y="252" width="1" height="45" fill="#000"/><rect x="95" y="254" width="5" height="43" fill="#000"/><rect x="96" y="255" width="3" height="41" fill="#fff"/><rect x="105" y="252" width="1" height="47" fill="#000"/><rect x="103" y="253" width="5" height="35" fill="#000"/><rect x="113" y="279" width="1" height="40" fill="#000"/><rect x="111" y="280" width="5" height="29" fill="#000"/><rect x="121" y="290" width="1" height="22" fill="#000"/><rect x="119" y="298" width="5" height="12" fill="#000"/><rect x="120" y="299" width="3" height="10" fill="#fff"/><rect x="129" y="288" width="1" height="35" fill="#000"/><rect x="127" y="298" width="5" height="20" fill="#000"/><rect x="137" y="301" width="1" height="30" fill="#000"/><rect x="135" y="316" width="5" height="2" fill="#000"/><rect x="145" y="300" width="1" height="27" fill="#000"/><rect x="143" y="316" width="5" height="3" fill="#000"/><rect x="153" y="328" width="1" height="22" fill="#000"/><rect x="151" y="330" width="5" height="18" fill="#000"/><rect x="152" y="331" width="3" height="16" fill="#fff"/><rect x="161" y="330" width="1" height="9" fill="#000"/><rect x="159" y="330" width="5" height="6" fill="#000"/><rect x="169" y="332" width="1" height="68" fill="#000"/><rect x="167" y="337" width="5" height="60" fill="#000"/><rect x="177" y="388" width="1" height="21" fill="#000"/><rect x="175" y="396" width="5" height="7" fill="#000"/><rect x="185" y="392" width="1" height="18" fill="#000"/><rect x="183" y="402" width="5" height="2" fill="#000"/><rect x="193" y="391" width="1" height="21" fill="#000"/><rect x="191" y="401" width="5" height="11" fill="#000"/><rect x="192" y="402" width="3" height="9" fill="#fff"/><rect x="201" y="390" width="1" height="14" fill="#000"/><rect x="199" y="392" width="5" height="10" fill="#000"/><rect x="200" y="393" width="3" height="8" fill="#fff"/><rect x="209" y="388" width="1" height="26" fill="#000"/><rect x="207" y="392" width="5" height="17" fill="#000"/><rect x="217" y="397" width="1" height="13" fill="#000"/><rect x="215" y="403" width="5" height="6" fill="#000"/><rect x="216" y="404" width="3" height="4" fill="#fff"/><rect x="225" y="399" width="1" height="40" fill="#000"/><rect x="223" y="403" width="5" height="21" fill="#000"/><rect x="233" y="417" width="1" height="20" fill="#000"/><rect x="231" y="421" width="5" height="7" fill="#000"/><rect x="241" y="415" width="1" height="39" fill="#000"/><rect x="239" y="424" width="5" height="5" fill="#000"/><rect x="240" y="425" width="3" height="3" fill="#fff"/><rect x="249" y="414" width="1" height="38" fill="#000"/><rect x="247" y="424" width="5" height="13" fill="#000"/><rect x="257" y="433" width="1" height="28" fill="#000"/><rect x="255" y="436" width="5" height="15" fill="#000"/><rect x="265" y="412" width="1" height="45" fill="#000"/><rect x="263" y="416" width="5" height="35" fill="#000"/><rect x="264" y="417" width="3" height="33" fill="#fff"/><rect x="273" y="417" width="1" height="20" fill="#000"/><rect x="271" y="419" width="5" height="17" fill="#000"/><rect x="281" y="419" width="1" height="19" fill="#000"/><rect x="279" y="431" width="5" height="5" fill="#000"/><rect x="280" y="432" width="3" height="3" fill="#fff"/><rect x="289" y="392" width="1" height="49" fill="#000"/><rect x="287" y="404" width="5" height="28" fill="#000"/><rect x="288" y="405" width="3" height="26" fill="#fff"/><rect x="297" y="391" width="1" height="21" fill="#000"/><rect x="295" y="398" width="5" height="9" fill="#000"/><rect x="296" y="399" width="3" height="7" fill="#fff"/><rect x="305" y="390" width="1" height="26" fill="#000"/><rect x="303" y="397" width="5" height="2" fill="#000"/><rect x="313" y="396" width="1" height="24" fill="#000"/><rect x="311" y="403" width="5" height="6" fill="#000"/><rect x="312" y="404" width="3" height="4" fill="#fff"/><rect x="321" y="371" width="1" height="37" fill="#000"/><rect x="319" y="393" width="5" height="11" fill="#000"/><rect x="320" y="394" width="3" height="9" fill="#fff"/><rect x="329" y="372" width="1" height="34" fill="#000"/><rect x="327" y="390" width="5" height="5" fill="#000"/><rect x="328" y="391" width="3" height="3" fill="#fff"/><rect x="337" y="385" width="1" height="60" fill="#000"/><rect x="335" y="390" width="5" height="48" fill="#000"/><rect x="345" y="431" width="1" height="15" fill="#000"/><rect x="343" y="437" width="5" height="3" fill="#000"/><rect x="353" y="428" width="1" height="17" fill="#000"/><rect x="351" y="439" width="5" height="1" fill="#000"/><rect x="361" y="430" width="1" height="43" fill="#000"/><rect x="359" y="439" width="5" height="32" fill="#000"/><rect x="369" y="462" width="1" height="24" fill="#000"/><rect x="367" y="469" width="5" height="12" fill="#000"/><rect x="377" y="478" width="1" height="15" fill="#000"/><rect x="375" y="480" width="5" height="2" fill="#000"/><rect x="385" y="462" width="1" height="32" fill="#000"/><rect x="383" y="479" width="5" height="2" fill="#000"/><rect x="393" y="478" width="1" height="6" fill="#000"/><rect x="391" y="479" width="5" height="3" fill="#000"/><rect x="401" y="464" width="1" height="18" fill="#000"/><rect x="399" y="466" width="5" height="14" fill="#000"/><rect x="400" y="467" width="3" height="12" fill="#fff"/><rect x="409" y="446" width="1" height="26" fill="#000"/><rect x="407" y="453" width="5" height="14" fill="#000"/><rect x="408" y="454" width="3" height="12" fill="#fff"/><rect x="417" y="440" width="1" height="30" fill="#000"/><rect x="415" y="450" width="5" height="4" fill="#000"/><rect x="416" y="451" width="3" height="2" fill="#fff"/><rect x="425" y="414" width="1" height="39" fill="#000"/><rect x="423" y="418" width="5" height="33" fill="#000"/><rect x="424" y="419" width="3" height="31" fill="#fff"/><rect x="433" y="385" width="1" height="35" fill="#000"/><rect x="431" y="395" width="5" height="24" fill="#000"/><rect x="432" y="396" width="3" height="22" fill="#fff"/><rect x="441" y="382" width="1" height="27" fill="#000"/><rect x="439" y="397" width="5" height="9" fill="#000"/><rect x="449" y="384" width="1" height="23" fill="#000"/><rect x="447" y="389" width="5" height="17" fill="#000"/><rect x="448" y="390" width="3" height="15" fill="#fff"/><rect x="457" y="386" width="1" height="20" fill="#000"/><rect x="455" y="389" width="5" height="7" fill="#000"/><rect x="465" y="341" width="1" height="60" fill="#000"/><rect x="463" y="380" width="5" height="16" fill="#000"/><rect x="464" y="381" width="3" height="14" fill="#fff"/><rect x="473" y="343" width="1" height="39" fill="#000"/><rect x="471" y="356" width="5" height="25" fill="#000"/><rect x="472" y="357" width="3" height="23" fill="#fff"/><rect x="481" y="347" width="1" height="20" fill="#000"/><rect x="479" y="350" width="5" height="15" fill="#000"/><rect x="489" y="350" width="1" height="31" fill="#000"/><rect x="487" y="364" width="5" height="10" fill="#000"/><rect x="497" y="366" width="1" height="28" fill="#000"/><rect x="495" y="372" width="5" height="19" fill="#000"/><rect x="505" y="369" width="1" height="26" fill="#000"/><rect x="503" y="378" width="5" height="13" fill="#000"/><rect x="504" y="379" width="3" height="11" fill="#fff"/><rect x="513" y="365" width="1" height="27" fill="#000"/><rect x="511" y="377" width="5" height="7" fill="#000"/><rect x="521" y="381" width="1" height="26" fill="#000"/><rect x="519" y="388" width="5" height="5" fill="#000"/><rect x="529" y="387" width="1" height="16" fill="#000"/><rect x="527" y="392" width="5" height="10" fill="#000"/><rect x="537" y="365" width="1" height="49" fill="#000"/><rect x="535" y="378" width="5" height="24" fill="#000"/><rect x="536" y="379" width="3" height="22" fill="#fff"/><rect x="545" y="366" width="1" height="29" fill="#000"/><rect x="543" y="378" width="5" height="16" fill="#000"/><rect x="553" y="383" width="1" height="37" fill="#000"/><rect x="551" y="394" width="5" height="26" fill="#000"/><rect x="561" y="391" width="1" height="31" fill="#000"/><rect x="559" y="397" width="5" height="20" fill="#000"/><rect x="560" y="398" width="3" height="18" fill="#fff"/><rect x="569" y="396" width="1" height="25" fill="#000"/><rect x="567" y="396" width="5" height="24" fill="#000"/><rect x="577" y="407" width="1" height="23" fill="#000"/><rect x="575" y="416" width="5" height="5" fill="#000"/><rect x="576" y="417" width="3" height="3" fill="#fff"/><rect x="585" y="410" width="1" height="20" fill="#000"/><rect x="583" y="415" width="5" height="10" fill="#000"/><rect x="593" y="416" width="1" height="20" fill="#000"/><rect x="591" y="421" width="5" height="4" fill="#000"/><rect x="592" y="422" width="3" height="2" fill="#fff"/><rect x="601" y="397" width="1" height="33" fill="#000"/><rect x="599" y="410" width="5" height="13" fill="#000"/><rect x="600" y="411" width="3" height="11" fill="#fff"/><rect x="609" y="404" width="1" height="34" fill="#000"/><rect x="607" y="410" width="5" height="20" fill="#000"/><rect x="617" y="414" width="1" height="28" fill="#000"/><rect x="615" y="429" width="5" height="9" fill="#000"/><rect x="625" y="426" width="1" height="40" fill="#000"/><rect x="623" y="437" width="5" height="26" fill="#000"/><rect x="633" y="455" width="1" height="33" fill="#000"/><rect x="631" y="462" width="5" height="21" fill="#000"/><rect x="641" y="475" width="1" height="18" fill="#000"/><rect x="639" y="483" width="5" height="7" fill="#000"/><rect x="649" y="487" width="1" height="26" fill="#000"/><rect x="647" y="488" width="5" height="14" fill="#000"/><rect x="657" y="496" width="1" height="21" fill="#000"/><rect x="655" y="501" width="5" height="6" fill="#000"/><rect x="665" y="486" width="1" height="27" fill="#000"/><rect x="663" y="493" width="5" height="14" fill="#000"/><rect x="664" y="494" width="3" height="12" fill="#fff"/><rect x="673" y="486" width="1" height="13" fill="#000"/><rect x="671" y="493" width="5" height="2" fill="#000"/><rect x="681" y="489" width="1" height="25" fill="#000"/><rect x="679" y="489" width="5" height="14" fill="#000"/><rect x="689" y="494" width="1" height="26" fill="#000"/><rect x="687" y="502" width="5" height="11" fill="#000"/><rect x="697" y="469" width="1" height="48" fill="#000"/><rect x="695" y="474" width="5" height="39" fill="#000"/><rect x="696" y="475" width="3" height="37" fill="#fff"/><rect x="705" y="453" width="1" height="23" fill="#000"/><rect x="703" y="457" width="5" height="18" fill="#000"/><rect x="704" y="458" width="3" height="16" fill="#fff"/><rect x="713" y="447" width="1" height="30" fill="#000"/><rect x="711" y="455" width="5" height="12" fill="#000"/><rect x="721" y="462" width="1" height="20" fill="#000"/><rect x="719" y="465" width="5" height="10" fill="#000"/><rect x="729" y="459" width="1" height="17" fill="#000"/><rect x="727" y="464" width="5" height="12" fill="#000"/><rect x="728" y="465" width="3" height="10" fill="#fff"/><rect x="737" y="460" width="1" height="11" fill="#000"/><rect x="735" y="463" width="5" height="2" fill="#000"/><rect x="745" y="462" width="1" height="70" fill="#000"/><rect x="743" y="462" width="5" height="23" fill="#000"/><rect x="753" y="475" width="1" height="33" fill="#000"/><rect x="751" y="487" width="5" height="15" fill="#000"/><rect x="761" y="482" width="1" height="23" fill="#000"/><rect x="759" y="496" width="5" height="7" fill="#000"/><rect x="760" y="497" width="3" height="5" fill="#fff"/><rect x="769" y="433" width="1" height="47" fill="#000"/><rect x="767" y="452" width="5" height="27" fill="#000"/><rect x="768" y="453" width="3" height="25" fill="#fff"/><rect x="777" y="422" width="1" height="31" fill="#000"/><rect x="775" y="427" width="5" height="26" fill="#000"/><rect x="776" y="428" width="3" height="24" fill="#fff"/><rect x="785" y="417" width="1" height="22" fill="#000"/><rect x="783" y="426" width="5" height="5" fill="#000"/><rect x="793" y="404" width="1" height="30" fill="#000"/><rect x="791" y="408" width="5" height="23" fill="#000"/><rect x="792" y="409" width="3" height="21" fill="#fff"/><rect x="801" y="393" width="1" height="22" fill="#000"/><rect x="799" y="399" width="5" height="10" fill="#000"/><rect x="800" y="400" width="3" height="8" fill="#fff"/><rect x="809" y="394" width="1" height="27" fill="#000"/><rect x="807" y="399" width="5" height="20" fill="#000"/><rect x="817" y="408" width="1" height="38" fill="#000"/><rect x="815" y="418" width="5" height="21" fill="#000"/><rect x="825" y="426" width="1" height="28" fill="#000"/><rect x="823" y="442" width="5" height="11" fill="#000"/><rect x="833" y="433" width="1" height="20" fill="#000"/><rect x="831" y="437" width="5" height="15" fill="#000"/><rect x="832" y="438" width="3" height="13" fill="#fff"/><rect x="841" y="401" width="1" height="38" fill="#000"/><rect x="839" y="411" width="5" height="27" fill="#000"/><rect x="840" y="412" width="3" height="25" fill="#fff"/><rect x="849" y="402" width="1" height="32" fill="#000"/><rect x="847" y="411" width="5" height="17" fill="#000"/><rect x="857" y="396" width="1" height="33" fill="#000"/><rect x="855" y="403" width="5" height="25" fill="#000"/><rect x="856" y="404" width="3" height="23" fill="#fff"/><rect x="865" y="389" width="1" height="20" fill="#000"/><rect x="863" y="404" width="5" height="1" fill="#000"/><rect x="873" y="383" width="1" height="29" fill="#000"/><rect x="871" y="404" width="5" height="1" fill="#000"/><rect x="881" y="394" width="1" height="16" fill="#000"/><rect x="879" y="398" width="5" height="7" fill="#000"/><rect x="880" y="399" width="3" height="5" fill="#fff"/><rect x="889" y="389" width="1" height="75" fill="#000"/><rect x="887" y="398" width="5" height="63" fill="#000"/><rect x="897" y="451" width="1" height="39" fill="#000"/><rect x="895" y="459" width="5" height="15" fill="#000"/><rect x="905" y="454" width="1" height="23" fill="#000"/><rect x="903" y="464" width="5" height="6" fill="#000"/><rect x="904" y="465" width="3" height="4" fill="#fff"/><rect x="913" y="443" width="1" height="25" fill="#000"/><rect x="911" y="460" width="5" height="5" fill="#000"/><rect x="912" y="461" width="3" height="3" fill="#fff"/><rect x="921" y="443" width="1" height="33" fill="#000"/><rect x="919" y="460" width="5" height="14" fill="#000"/><rect x="929" y="426" width="1" height="48" fill="#000"/><rect x="927" y="435" width="5" height="39" fill="#000"/><rect x="928" y="436" width="3" height="37" fill="#fff"/><rect x="937" y="413" width="1" height="32" fill="#000"/><rect x="935" y="421" width="5" height="16" fill="#000"/><rect x="936" y="422" width="3" height="14" fill="#fff"/><rect x="945" y="410" width="1" height="38" fill="#000"/><rect x="943" y="420" width="5" height="24" fill="#000"/><rect x="953" y="420" width="1" height="25" fill="#000"/><rect x="951" y="433" width="5" height="11" fill="#000"/><rect x="952" y="434" width="3" height="9" fill="#fff"/><rect x="961" y="423" width="1" height="23" fill="#000"/><rect x="959" y="432" width="5" height="4" fill="#000"/><rect x="969" y="420" width="1" height="42" fill="#000"/><rect x="967" y="435" width="5" height="9" fill="#000"/><rect x="977" y="437" width="1" height="29" fill="#000"/><rect x="975" y="443" width="5" height="14" fill="#000"/></g><polyline points="9,333.3 17.4,335.7 25.5,337.3 34.8,338 41.8,342.6 50,344.3 58,343.3 69.7,341 81.3,335.7 93,329.9 102,326.4 113.8,327.5 130,324 144,320.6 150,318.8 159.3,317.7 169.5,321.6 184.8,325 201.5,331.4 217.3,341.4 241.3,365.7 265.4,390 281.7,402.5 294.3,408.6 305,414.3 311,414.5 317,413.6 329.5,413 335.8,414.7 340,416.4 352.6,419.1 365.1,424.5 377.7,429.6 392.8,434.6 402.8,435.4 410.4,437.5 428,438 438,437.5 443,438.3 460.6,437.5 472,434.6 484.5,428.3 499.5,423.3 508,417.3 520.4,410.4 530.4,404 538,398.2 545,394.8 553.6,391.7 561.5,389.7 570.8,389.7 585.6,391.7 601,394.8 617.4,401.4 632.5,411.4 641.8,417 649.5,424 665,435.7 681.5,451.6 689,456.5 697.5,459.6 705,462.4 713.6,466 729,471.7 739.3,474 748.6,478.7 757,483 766,484 777.4,481.2 793,471.5 809.5,461 825,455 841.5,449.4 857,443.6 873.5,435.5 889,431.3 898.6,429.7 905.5,428 916,428.5 923,431 937.5,432 953,434.6 969.5,434.6 978,437" fill="none" stroke="#0000ff" stroke-width="3" stroke-linejoin="round" stroke-linecap="butt" shape-rendering="crispEdges"/><g shape-rendering="crispEdges"><rect x="9" y="340" width="1220" height="2" fill="#dc143c"/><rect x="9" y="490" width="1220" height="2" fill="#0000cd"/><rect x="9" y="533" width="1220" height="2" fill="#0000cd"/></g><polyline points="9,376 105.5,252 257.5,461.3 321.5,371 377.8,491.4 465.5,341.8 745.5,533.5 873.5,383 897.5,490.5" fill="none" stroke="#ff0000" stroke-width="1.9" stroke-linejoin="miter" shape-rendering="crispEdges"/><path d="M16 308h2v1h-2zM15 309h2v1h-2zM18 309h1v1h-1zM15 310h2v1h-2zM18 310h1v1h-1zM14 311h3v1h-3zM19 311h1v1h-1zM14 312h3v1h-3zM19 312h1v1h-1zM13 313h5v1h-5zM20 313h1v1h-1zM12 314h3v1h-3zM17 314h3v1h-3zM21 314h1v1h-1zM12 315h2v1h-2zM20 315h2v1h-2zM11 316h1v1h-1zM22 316h1v1h-1z" fill="#dc143c" shape-rendering="crispEdges"/><path d="M104 237h2v1h-2zM103 238h2v1h-2zM106 238h1v1h-1zM103 239h2v1h-2zM106 239h1v1h-1zM102 240h3v1h-3zM107 240h1v1h-1zM102 241h3v1h-3zM107 241h1v1h-1zM101 242h5v1h-5zM108 242h1v1h-1zM100 243h3v1h-3zM105 243h3v1h-3zM109 243h1v1h-1zM100 244h2v1h-2zM108 244h2v1h-2zM99 245h1v1h-1zM110 245h1v1h-1z" fill="#dc143c" shape-rendering="crispEdges"/><path d="M208 374h2v1h-2zM207 375h2v1h-2zM210 375h1v1h-1zM207 376h2v1h-2zM210 376h1v1h-1zM206 377h3v1h-3zM211 377h1v1h-1zM206 378h3v1h-3zM211 378h1v1h-1zM205 379h5v1h-5zM212 379h1v1h-1zM204 380h3v1h-3zM209 380h3v1h-3zM213 380h1v1h-1zM204 381h2v1h-2zM212 381h2v1h-2zM203 382h1v1h-1zM214 382h1v1h-1z" fill="#dc143c" shape-rendering="crispEdges"/><path d="M264 398h2v1h-2zM263 399h2v1h-2zM266 399h1v1h-1zM263 400h2v1h-2zM266 400h1v1h-1zM262 401h3v1h-3zM267 401h1v1h-1zM262 402h3v1h-3zM267 402h1v1h-1zM261 403h5v1h-5zM268 403h1v1h-1zM260 404h3v1h-3zM265 404h3v1h-3zM269 404h1v1h-1zM260 405h2v1h-2zM268 405h2v1h-2zM259 406h1v1h-1zM270 406h1v1h-1z" fill="#dc143c" shape-rendering="crispEdges"/><path d="M320 356h2v1h-2zM319 357h2v1h-2zM322 357h1v1h-1zM319 358h2v1h-2zM322 358h1v1h-1zM318 359h3v1h-3zM323 359h1v1h-1zM318 360h3v1h-3zM323 360h1v1h-1zM317 361h5v1h-5zM324 361h1v1h-1zM316 362h3v1h-3zM321 362h3v1h-3zM325 362h1v1h-1zM316 363h2v1h-2zM324 363h2v1h-2zM315 364h1v1h-1zM326 364h1v1h-1z" fill="#dc143c" shape-rendering="crispEdges"/><path d="M440 368h2v1h-2zM439 369h2v1h-2zM442 369h1v1h-1zM439 370h2v1h-2zM442 370h1v1h-1zM438 371h3v1h-3zM443 371h1v1h-1zM438 372h3v1h-3zM443 372h1v1h-1zM437 373h5v1h-5zM444 373h1v1h-1zM436 374h3v1h-3zM441 374h3v1h-3zM445 374h1v1h-1zM436 375h2v1h-2zM444 375h2v1h-2zM435 376h1v1h-1zM446 376h1v1h-1z" fill="#dc143c" shape-rendering="crispEdges"/><path d="M464 327h2v1h-2zM463 328h2v1h-2zM466 328h1v1h-1zM463 329h2v1h-2zM466 329h1v1h-1zM462 330h3v1h-3zM467 330h1v1h-1zM462 331h3v1h-3zM467 331h1v1h-1zM461 332h5v1h-5zM468 332h1v1h-1zM460 333h3v1h-3zM465 333h3v1h-3zM469 333h1v1h-1zM460 334h2v1h-2zM468 334h2v1h-2zM459 335h1v1h-1zM470 335h1v1h-1z" fill="#dc143c" shape-rendering="crispEdges"/><path d="M536 351h2v1h-2zM535 352h2v1h-2zM538 352h1v1h-1zM535 353h2v1h-2zM538 353h1v1h-1zM534 354h3v1h-3zM539 354h1v1h-1zM534 355h3v1h-3zM539 355h1v1h-1zM533 356h5v1h-5zM540 356h1v1h-1zM532 357h3v1h-3zM537 357h3v1h-3zM541 357h1v1h-1zM532 358h2v1h-2zM540 358h2v1h-2zM531 359h1v1h-1zM542 359h1v1h-1z" fill="#dc143c" shape-rendering="crispEdges"/><path d="M600 386h2v1h-2zM599 387h2v1h-2zM602 387h1v1h-1zM599 388h2v1h-2zM602 388h1v1h-1zM598 389h3v1h-3zM603 389h1v1h-1zM598 390h3v1h-3zM603 390h1v1h-1zM597 391h5v1h-5zM604 391h1v1h-1zM596 392h3v1h-3zM601 392h3v1h-3zM605 392h1v1h-1zM596 393h2v1h-2zM604 393h2v1h-2zM595 394h1v1h-1zM606 394h1v1h-1z" fill="#dc143c" shape-rendering="crispEdges"/><path d="M672 469h2v1h-2zM671 470h2v1h-2zM674 470h1v1h-1zM671 471h2v1h-2zM674 471h1v1h-1zM670 472h3v1h-3zM675 472h1v1h-1zM670 473h3v1h-3zM675 473h1v1h-1zM669 474h5v1h-5zM676 474h1v1h-1zM668 475h3v1h-3zM673 475h3v1h-3zM677 475h1v1h-1zM668 476h2v1h-2zM676 476h2v1h-2zM667 477h1v1h-1zM678 477h1v1h-1z" fill="#dc143c" shape-rendering="crispEdges"/><path d="M712 433h2v1h-2zM711 434h2v1h-2zM714 434h1v1h-1zM711 435h2v1h-2zM714 435h1v1h-1zM710 436h3v1h-3zM715 436h1v1h-1zM710 437h3v1h-3zM715 437h1v1h-1zM709 438h5v1h-5zM716 438h1v1h-1zM708 439h3v1h-3zM713 439h3v1h-3zM717 439h1v1h-1zM708 440h2v1h-2zM716 440h2v1h-2zM707 441h1v1h-1zM718 441h1v1h-1z" fill="#dc143c" shape-rendering="crispEdges"/><path d="M800 379h2v1h-2zM799 380h2v1h-2zM802 380h1v1h-1zM799 381h2v1h-2zM802 381h1v1h-1zM798 382h3v1h-3zM803 382h1v1h-1zM798 383h3v1h-3zM803 383h1v1h-1zM797 384h5v1h-5zM804 384h1v1h-1zM796 385h3v1h-3zM801 385h3v1h-3zM805 385h1v1h-1zM796 386h2v1h-2zM804 386h2v1h-2zM795 387h1v1h-1zM806 387h1v1h-1z" fill="#dc143c" shape-rendering="crispEdges"/><path d="M872 366h2v1h-2zM871 367h2v1h-2zM874 367h1v1h-1zM871 368h2v1h-2zM874 368h1v1h-1zM870 369h3v1h-3zM875 369h1v1h-1zM870 370h3v1h-3zM875 370h1v1h-1zM869 371h5v1h-5zM876 371h1v1h-1zM868 372h3v1h-3zM873 372h3v1h-3zM877 372h1v1h-1zM868 373h2v1h-2zM876 373h2v1h-2zM867 374h1v1h-1zM878 374h1v1h-1z" fill="#dc143c" shape-rendering="crispEdges"/><path d="M944 398h2v1h-2zM943 399h2v1h-2zM946 399h1v1h-1zM943 400h2v1h-2zM946 400h1v1h-1zM942 401h3v1h-3zM947 401h1v1h-1zM942 402h3v1h-3zM947 402h1v1h-1zM941 403h5v1h-5zM948 403h1v1h-1zM940 404h3v1h-3zM945 404h3v1h-3zM949 404h1v1h-1zM940 405h2v1h-2zM948 405h2v1h-2zM939 406h1v1h-1zM950 406h1v1h-1z" fill="#dc143c" shape-rendering="crispEdges"/><path d="M48 386h2v1h-2zM49 385h2v1h-2zM47 385h1v1h-1zM49 384h2v1h-2zM47 384h1v1h-1zM49 383h3v1h-3zM46 383h1v1h-1zM49 382h3v1h-3zM46 382h1v1h-1zM48 381h5v1h-5zM45 381h1v1h-1zM51 380h3v1h-3zM46 380h3v1h-3zM44 380h1v1h-1zM52 379h2v1h-2zM44 379h2v1h-2zM54 378h1v1h-1zM43 378h1v1h-1z" fill="#dc143c" shape-rendering="crispEdges"/><path d="M256 473h2v1h-2zM257 472h2v1h-2zM255 472h1v1h-1zM257 471h2v1h-2zM255 471h1v1h-1zM257 470h3v1h-3zM254 470h1v1h-1zM257 469h3v1h-3zM254 469h1v1h-1zM256 468h5v1h-5zM253 468h1v1h-1zM259 467h3v1h-3zM254 467h3v1h-3zM252 467h1v1h-1zM260 466h2v1h-2zM252 466h2v1h-2zM262 465h1v1h-1zM251 465h1v1h-1z" fill="#dc143c" shape-rendering="crispEdges"/><path d="M288 452h2v1h-2zM289 451h2v1h-2zM287 451h1v1h-1zM289 450h2v1h-2zM287 450h1v1h-1zM289 449h3v1h-3zM286 449h1v1h-1zM289 448h3v1h-3zM286 448h1v1h-1zM288 447h5v1h-5zM285 447h1v1h-1zM291 446h3v1h-3zM286 446h3v1h-3zM284 446h1v1h-1zM292 445h2v1h-2zM284 445h2v1h-2zM294 444h1v1h-1zM283 444h1v1h-1z" fill="#dc143c" shape-rendering="crispEdges"/><path d="M312 431h2v1h-2zM313 430h2v1h-2zM311 430h1v1h-1zM313 429h2v1h-2zM311 429h1v1h-1zM313 428h3v1h-3zM310 428h1v1h-1zM313 427h3v1h-3zM310 427h1v1h-1zM312 426h5v1h-5zM309 426h1v1h-1zM315 425h3v1h-3zM310 425h3v1h-3zM308 425h1v1h-1zM316 424h2v1h-2zM308 424h2v1h-2zM318 423h1v1h-1zM307 423h1v1h-1z" fill="#dc143c" shape-rendering="crispEdges"/><path d="M376 506h2v1h-2zM377 505h2v1h-2zM375 505h1v1h-1zM377 504h2v1h-2zM375 504h1v1h-1zM377 503h3v1h-3zM374 503h1v1h-1zM377 502h3v1h-3zM374 502h1v1h-1zM376 501h5v1h-5zM373 501h1v1h-1zM379 500h3v1h-3zM374 500h3v1h-3zM372 500h1v1h-1zM380 499h2v1h-2zM372 499h2v1h-2zM382 498h1v1h-1zM371 498h1v1h-1z" fill="#dc143c" shape-rendering="crispEdges"/><path d="M656 528h2v1h-2zM657 527h2v1h-2zM655 527h1v1h-1zM657 526h2v1h-2zM655 526h1v1h-1zM657 525h3v1h-3zM654 525h1v1h-1zM657 524h3v1h-3zM654 524h1v1h-1zM656 523h5v1h-5zM653 523h1v1h-1zM659 522h3v1h-3zM654 522h3v1h-3zM652 522h1v1h-1zM660 521h2v1h-2zM652 521h2v1h-2zM662 520h1v1h-1zM651 520h1v1h-1z" fill="#dc143c" shape-rendering="crispEdges"/><path d="M688 531h2v1h-2zM689 530h2v1h-2zM687 530h1v1h-1zM689 529h2v1h-2zM687 529h1v1h-1zM689 528h3v1h-3zM686 528h1v1h-1zM689 527h3v1h-3zM686 527h1v1h-1zM688 526h5v1h-5zM685 526h1v1h-1zM691 525h3v1h-3zM686 525h3v1h-3zM684 525h1v1h-1zM692 524h2v1h-2zM684 524h2v1h-2zM694 523h1v1h-1zM683 523h1v1h-1z" fill="#dc143c" shape-rendering="crispEdges"/><path d="M720 493h2v1h-2zM721 492h2v1h-2zM719 492h1v1h-1zM721 491h2v1h-2zM719 491h1v1h-1zM721 490h3v1h-3zM718 490h1v1h-1zM721 489h3v1h-3zM718 489h1v1h-1zM720 488h5v1h-5zM717 488h1v1h-1zM723 487h3v1h-3zM718 487h3v1h-3zM716 487h1v1h-1zM724 486h2v1h-2zM716 486h2v1h-2zM726 485h1v1h-1zM715 485h1v1h-1z" fill="#dc143c" shape-rendering="crispEdges"/><path d="M744 544h2v1h-2zM745 543h2v1h-2zM743 543h1v1h-1zM745 542h2v1h-2zM743 542h1v1h-1zM745 541h3v1h-3zM742 541h1v1h-1zM745 540h3v1h-3zM742 540h1v1h-1zM744 539h5v1h-5zM741 539h1v1h-1zM747 538h3v1h-3zM742 538h3v1h-3zM740 538h1v1h-1zM748 537h2v1h-2zM740 537h2v1h-2zM750 536h1v1h-1zM739 536h1v1h-1z" fill="#dc143c" shape-rendering="crispEdges"/><path d="M824 465h2v1h-2zM825 464h2v1h-2zM823 464h1v1h-1zM825 463h2v1h-2zM823 463h1v1h-1zM825 462h3v1h-3zM822 462h1v1h-1zM825 461h3v1h-3zM822 461h1v1h-1zM824 460h5v1h-5zM821 460h1v1h-1zM827 459h3v1h-3zM822 459h3v1h-3zM820 459h1v1h-1zM828 458h2v1h-2zM820 458h2v1h-2zM830 457h1v1h-1zM819 457h1v1h-1z" fill="#dc143c" shape-rendering="crispEdges"/><path d="M896 501h2v1h-2zM897 500h2v1h-2zM895 500h1v1h-1zM897 499h2v1h-2zM895 499h1v1h-1zM897 498h3v1h-3zM894 498h1v1h-1zM897 497h3v1h-3zM894 497h1v1h-1zM896 496h5v1h-5zM893 496h1v1h-1zM899 495h3v1h-3zM894 495h3v1h-3zM892 495h1v1h-1zM900 494h2v1h-2zM892 494h2v1h-2zM902 493h1v1h-1zM891 493h1v1h-1z" fill="#dc143c" shape-rendering="crispEdges"/><path d="M996.5 492V505H990L1000.7 516.3L1011 505H1004.6V492" fill="none" stroke="#ff0000" stroke-width="2"/></g><path d="M979 110H989L984 115.5Z" fill="#778899"/><g shape-rendering="crispEdges"><rect x="8" y="109" width="1222" height="1" fill="#000"/><rect x="8" y="109" width="1" height="559" fill="#000"/><rect x="1229" y="109" width="1" height="559" fill="#000"/><rect x="8" y="667" width="1222" height="1" fill="#000"/><rect x="1230" y="136" width="2" height="1" fill="#000"/><rect x="1230" y="169" width="2" height="1" fill="#000"/><rect x="1230" y="202" width="2" height="1" fill="#000"/><rect x="1230" y="235" width="2" height="1" fill="#000"/><rect x="1230" y="268" width="2" height="1" fill="#000"/><rect x="1230" y="301" width="2" height="1" fill="#000"/><rect x="1230" y="334" width="2" height="1" fill="#000"/><rect x="1230" y="367" width="2" height="1" fill="#000"/><rect x="1230" y="400" width="2" height="1" fill="#000"/><rect x="1230" y="433" width="2" height="1" fill="#000"/><rect x="1230" y="466" width="2" height="1" fill="#000"/><rect x="1230" y="499" width="2" height="1" fill="#000"/><rect x="1230" y="532" width="2" height="1" fill="#000"/><rect x="1230" y="565" width="2" height="1" fill="#000"/><rect x="1230" y="598" width="2" height="1" fill="#000"/><rect x="1230" y="631" width="2" height="1" fill="#000"/><rect x="1230" y="664" width="2" height="1" fill="#000"/><rect x="9" y="668" width="1" height="3" fill="#000"/><rect x="73" y="668" width="1" height="3" fill="#000"/><rect x="137" y="668" width="1" height="3" fill="#000"/><rect x="201" y="668" width="1" height="3" fill="#000"/><rect x="265" y="668" width="1" height="3" fill="#000"/><rect x="329" y="668" width="1" height="3" fill="#000"/><rect x="393" y="668" width="1" height="3" fill="#000"/><rect x="457" y="668" width="1" height="3" fill="#000"/><rect x="521" y="668" width="1" height="3" fill="#000"/><rect x="585" y="668" width="1" height="3" fill="#000"/><rect x="649" y="668" width="1" height="3" fill="#000"/><rect x="713" y="668" width="1" height="3" fill="#000"/><rect x="777" y="668" width="1" height="3" fill="#000"/><rect x="841" y="668" width="1" height="3" fill="#000"/><rect x="905" y="668" width="1" height="3" fill="#000"/><rect x="969" y="668" width="1" height="3" fill="#000"/></g><defs><clipPath id="c1"><rect x="-12" y="-30" width="24" height="26.500"/><rect x="-0.900" y="-4" width="3.300" height="6"/></clipPath></defs><g transform="translate(745.6,578.9) scale(1,1)" clip-path="url(#c1)"><text x="0" y="0" font-size="32.5" fill="#0000ff" text-anchor="middle" font-family="Liberation Sans, sans-serif">1</text></g><g transform="translate(872.5,382.9) scale(1.08,1)"><text x="0" y="0" font-size="32.5" fill="#0000ff" text-anchor="middle" font-family="Liberation Sans, sans-serif">2</text></g><g transform="translate(1033,619.9) scale(1.15,1)"><text x="0" y="0" font-size="32.5" fill="#0000ff" text-anchor="middle" font-family="Liberation Sans, sans-serif">3</text></g></svg>
<span class="t" style="left:1235.0px;top:129.5px;font-size:10px;line-height:14px;color:#000;transform:scaleX(0.8854);transform-origin:0 50%;">0.97230</span>
<span class="t" style="left:1235.0px;top:162.5px;font-size:10px;line-height:14px;color:#000;transform:scaleX(0.8854);transform-origin:0 50%;">0.96470</span>
<span class="t" style="left:1235.0px;top:195.5px;font-size:10px;line-height:14px;color:#000;transform:scaleX(0.8854);transform-origin:0 50%;">0.95690</span>
<span class="t" style="left:1235.0px;top:228.5px;font-size:10px;line-height:14px;color:#000;transform:scaleX(0.8854);transform-origin:0 50%;">0.94930</span>
<span class="t" style="left:1235.0px;top:261.5px;font-size:10px;line-height:14px;color:#000;transform:scaleX(0.8854);transform-origin:0 50%;">0.94170</span>
<span class="t" style="left:1235.0px;top:294.5px;font-size:10px;line-height:14px;color:#000;transform:scaleX(0.8854);transform-origin:0 50%;">0.93390</span>
<span class="t" style="left:1235.0px;top:327.5px;font-size:10px;line-height:14px;color:#000;transform:scaleX(0.8854);transform-origin:0 50%;">0.92630</span>
<span class="t" style="left:1235.0px;top:360.5px;font-size:10px;line-height:14px;color:#000;transform:scaleX(0.8854);transform-origin:0 50%;">0.91850</span>
<span class="t" style="left:1235.0px;top:393.5px;font-size:10px;line-height:14px;color:#000;transform:scaleX(0.8854);transform-origin:0 50%;">0.91090</span>
<span class="t" style="left:1235.0px;top:426.5px;font-size:10px;line-height:14px;color:#000;transform:scaleX(0.8854);transform-origin:0 50%;">0.90330</span>
<span class="t" style="left:1235.0px;top:459.5px;font-size:10px;line-height:14px;color:#000;transform:scaleX(0.8854);transform-origin:0 50%;">0.89550</span>
<span class="t" style="left:1235.0px;top:492.5px;font-size:10px;line-height:14px;color:#000;transform:scaleX(0.8854);transform-origin:0 50%;">0.88790</span>
<span class="t" style="left:1235.0px;top:525.5px;font-size:10px;line-height:14px;color:#000;transform:scaleX(0.8854);transform-origin:0 50%;">0.88030</span>
<span class="t" style="left:1235.0px;top:558.5px;font-size:10px;line-height:14px;color:#000;transform:scaleX(0.8854);transform-origin:0 50%;">0.87250</span>
<span class="t" style="left:1235.0px;top:591.5px;font-size:10px;line-height:14px;color:#000;transform:scaleX(0.8854);transform-origin:0 50%;">0.86490</span>
<span class="t" style="left:1235.0px;top:624.5px;font-size:10px;line-height:14px;color:#000;transform:scaleX(0.8854);transform-origin:0 50%;">0.85710</span>
<span class="t" style="left:1235.0px;top:657.5px;font-size:10px;line-height:14px;color:#000;transform:scaleX(0.8854);transform-origin:0 50%;">0.84950</span>
<div class="b" style="left:1232px;top:335px;width:39px;height:11px;background:#dc143c"></div>
<span class="t" style="left:1235.0px;top:334.0px;font-size:10px;line-height:14px;color:#fff;transform:scaleX(0.8854);transform-origin:0 50%;">0.92469</span>
<div class="b" style="left:1232px;top:451px;width:39px;height:10px;background:#000"></div>
<span class="t" style="left:1235.0px;top:449.5px;font-size:10px;line-height:14px;color:#fff;transform:scaleX(0.8854);transform-origin:0 50%;">0.89787</span>
<div class="b" style="left:1232px;top:485px;width:39px;height:11px;background:#0000cd"></div>
<span class="t" style="left:1235.0px;top:484.0px;font-size:10px;line-height:14px;color:#fff;transform:scaleX(0.8854);transform-origin:0 50%;">0.88979</span>
<div class="b" style="left:1232px;top:528px;width:39px;height:11px;background:#0000cd"></div>
<span class="t" style="left:1235.0px;top:527.0px;font-size:10px;line-height:14px;color:#fff;transform:scaleX(0.8854);transform-origin:0 50%;">0.87980</span>
<div class="b" style="left:10px;top:110px;width:227px;height:15px;background:#fff"></div>
<svg class="b" style="left:12px;top:115px" width="8" height="6" viewBox="0 0 8 6" ><path d="M0.5 1H7.5L4 5Z" fill="#000"/></svg>
<span class="t" style="left:23.0px;top:110.5px;font-size:10px;line-height:14px;color:#000;transform:scaleX(0.9838);transform-origin:0 50%;">USDCHF,Daily</span>
<span class="t" style="left:94.7px;top:110.5px;font-size:10px;line-height:14px;color:#000;transform:scaleX(0.8992);transform-origin:0 50%;">0.90083</span>
<span class="t" style="left:130.7px;top:110.5px;font-size:10px;line-height:14px;color:#000;transform:scaleX(0.8992);transform-origin:0 50%;">0.90221</span>
<span class="t" style="left:166.7px;top:110.5px;font-size:10px;line-height:14px;color:#000;transform:scaleX(0.8992);transform-origin:0 50%;">0.89581</span>
<span class="t" style="left:202.7px;top:110.5px;font-size:10px;line-height:14px;color:#000;transform:scaleX(0.8992);transform-origin:0 50%;">0.89787</span>
<span class="t" style="left:8.0px;top:670.0px;font-size:10px;line-height:14px;color:#000;letter-spacing:-0.42px;">21 Aug 2013</span>
<span class="t" style="left:72.0px;top:670.0px;font-size:10px;line-height:14px;color:#000;letter-spacing:-0.42px;">2 Sep 2013</span>
<span class="t" style="left:136.0px;top:670.0px;font-size:10px;line-height:14px;color:#000;letter-spacing:-0.42px;">12 Sep 2013</span>
<span class="t" style="left:200.0px;top:670.0px;font-size:10px;line-height:14px;color:#000;letter-spacing:-0.42px;">24 Sep 2013</span>
<span class="t" style="left:264.0px;top:670.0px;font-size:10px;line-height:14px;color:#000;letter-spacing:-0.42px;">4 Oct 2013</span>
<span class="t" style="left:328.0px;top:670.0px;font-size:10px;line-height:14px;color:#000;letter-spacing:-0.42px;">16 Oct 2013</span>
<span class="t" style="left:392.0px;top:670.0px;font-size:10px;line-height:14px;color:#000;letter-spacing:-0.42px;">27 Oct 2013</span>
<span class="t" style="left:456.0px;top:670.0px;font-size:10px;line-height:14px;color:#000;letter-spacing:-0.42px;">6 Nov 2013</span>
<span class="t" style="left:520.0px;top:670.0px;font-size:10px;line-height:14px;color:#000;letter-spacing:-0.42px;">18 Nov 2013</span>
<span class="t" style="left:584.0px;top:670.0px;font-size:10px;line-height:14px;color:#000;letter-spacing:-0.42px;">28 Nov 2013</span>
<span class="t" style="left:648.0px;top:670.0px;font-size:10px;line-height:14px;color:#000;letter-spacing:-0.42px;">10 Dec 2013</span>
<span class="t" style="left:712.0px;top:670.0px;font-size:10px;line-height:14px;color:#000;letter-spacing:-0.42px;">20 Dec 2013</span>
<span class="t" style="left:776.0px;top:670.0px;font-size:10px;line-height:14px;color:#000;letter-spacing:-0.42px;">3 Jan 2014</span>
<span class="t" style="left:840.0px;top:670.0px;font-size:10px;line-height:14px;color:#000;letter-spacing:-0.42px;">15 Jan 2014</span>
<span class="t" style="left:904.0px;top:670.0px;font-size:10px;line-height:14px;color:#000;letter-spacing:-0.42px;">27 Jan 2014</span>
<span class="t" style="left:968.0px;top:670.0px;font-size:10px;line-height:14px;color:#000;letter-spacing:-0.42px;">6 Feb 2014</span>
<div class="b" style="left:4px;top:687px;width:1270px;height:1px;background:#000"></div>
<div class="b" style="left:4px;top:688px;width:1270px;height:18px;background:#e1e1e1"></div>
<div class="b" style="left:5px;top:688px;width:1px;height:19px;background:#696960"></div>
<div class="b" style="left:4px;top:707px;width:1270px;height:1px;background:#fff"></div>
<span class="t" style="left:18.5px;top:688.3px;font-size:12px;line-height:16px;color:#7c7c74;transform:scaleX(0.8148);transform-origin:0 50%;">EURUSD,H4</span>
<span class="t" style="left:97.0px;top:688.3px;font-size:12px;line-height:16px;color:#7c7c74;transform:scaleX(0.8178);transform-origin:0 50%;">GBPJPY,Daily</span>
<span class="t" style="left:182.5px;top:688.3px;font-size:12px;line-height:16px;color:#7c7c74;transform:scaleX(0.8292);transform-origin:0 50%;">AUDUSD,H4</span>
<span class="t" style="left:262.0px;top:688.3px;font-size:12px;line-height:16px;color:#7c7c74;transform:scaleX(0.8118);transform-origin:0 50%;">GBPUSD,Daily</span>
<span class="t" style="left:350.5px;top:688.3px;font-size:12px;line-height:16px;color:#7c7c74;transform:scaleX(0.8298);transform-origin:0 50%;">USDJPY,H4</span>
<span class="t" style="left:427.5px;top:688.3px;font-size:12px;line-height:16px;color:#7c7c74;transform:scaleX(0.8377);transform-origin:0 50%;">EURJPY,Daily</span>
<span class="t" style="left:513.0px;top:688.3px;font-size:12px;line-height:16px;color:#7c7c74;transform:scaleX(0.8312);transform-origin:0 50%;">NZDUSD,Daily</span>
<span class="t" style="left:602.0px;top:688.3px;font-size:12px;line-height:16px;color:#7c7c74;transform:scaleX(0.8325);transform-origin:0 50%;">GBPCHF,Daily</span>
<span class="t" style="left:689.5px;top:688.3px;font-size:12px;line-height:16px;color:#7c7c74;transform:scaleX(0.8311);transform-origin:0 50%;">XAUUSD,Daily</span>
<span class="t" style="left:778.0px;top:688.3px;font-size:12px;line-height:16px;color:#7c7c74;transform:scaleX(0.8292);transform-origin:0 50%;">USDCAD,H4</span>
<span class="t" style="left:858.0px;top:688.3px;font-size:12px;line-height:16px;color:#7c7c74;transform:scaleX(0.8214);transform-origin:0 50%;">EURGBP,Daily</span>
<span class="t" style="left:1034.0px;top:688.3px;font-size:12px;line-height:16px;color:#7c7c74;transform:scaleX(0.8390);transform-origin:0 50%;">EURCHF,H4</span>
<span class="t" style="left:1114.0px;top:688.3px;font-size:12px;line-height:16px;color:#7c7c74;transform:scaleX(0.8446);transform-origin:0 50%;">AUDNZD,H4</span>
<div class="b" style="left:88px;top:690px;width:1px;height:12px;background:#7c7c74"></div>
<div class="b" style="left:172px;top:690px;width:1px;height:12px;background:#7c7c74"></div>
<div class="b" style="left:252px;top:690px;width:1px;height:12px;background:#7c7c74"></div>
<div class="b" style="left:340px;top:690px;width:1px;height:12px;background:#7c7c74"></div>
<div class="b" style="left:416px;top:690px;width:1px;height:12px;background:#7c7c74"></div>
<div class="b" style="left:504px;top:690px;width:1px;height:12px;background:#7c7c74"></div>
<div class="b" style="left:592px;top:690px;width:1px;height:12px;background:#7c7c74"></div>
<div class="b" style="left:680px;top:690px;width:1px;height:12px;background:#7c7c74"></div>
<div class="b" style="left:768px;top:690px;width:1px;height:12px;background:#7c7c74"></div>
<div class="b" style="left:848px;top:690px;width:1px;height:12px;background:#7c7c74"></div>
<div class="b" style="left:1104px;top:690px;width:1px;height:12px;background:#7c7c74"></div>
<div class="b" style="left:1184px;top:690px;width:1px;height:12px;background:#7c7c74"></div>
<div class="b" style="left:936px;top:687px;width:88px;height:19px;background:#fff;border:1px solid #000;border-top:none;box-sizing:border-box;border-radius:0 0 2px 2px"></div>
<span class="t" style="left:945.0px;top:688.3px;font-size:12px;line-height:16px;color:#000;transform:scaleX(0.8516);transform-origin:0 50%;">USDCHF,Daily</span>
<svg class="b" style="left:1244px;top:692px" width="6" height="9" viewBox="0 0 6 9" ><path d="M5 0.500V8.500L0.500 4.500Z" fill="#9a9a9a"/></svg>
<svg class="b" style="left:1261px;top:692px" width="6" height="9" viewBox="0 0 6 9" ><path d="M1 0.500V8.500L5.500 4.500Z" fill="#9a9a9a"/></svg>
<div class="b" style="left:4px;top:708px;width:1270px;height:20px;background:#e1e1e1"></div>
<span class="t" style="left:6.5px;top:711.0px;font-size:12px;line-height:16px;color:#000;transform:scaleX(0.9013);transform-origin:0 50%;">Для справки, нажмите F1</span>
<div class="b" style="left:553px;top:711px;width:1px;height:16px;background:#a6a6a6"></div>
<div class="b" style="left:554px;top:711px;width:1px;height:16px;background:#fff"></div>
<div class="b" style="left:662px;top:711px;width:1px;height:16px;background:#a6a6a6"></div>
<div class="b" style="left:663px;top:711px;width:1px;height:16px;background:#fff"></div>
<div class="b" style="left:763px;top:711px;width:1px;height:16px;background:#a6a6a6"></div>
<div class="b" style="left:764px;top:711px;width:1px;height:16px;background:#fff"></div>
<div class="b" style="left:835px;top:711px;width:1px;height:16px;background:#a6a6a6"></div>
<div class="b" style="left:836px;top:711px;width:1px;height:16px;background:#fff"></div>
<div class="b" style="left:906px;top:711px;width:1px;height:16px;background:#a6a6a6"></div>
<div class="b" style="left:907px;top:711px;width:1px;height:16px;background:#fff"></div>
<div class="b" style="left:975px;top:711px;width:1px;height:16px;background:#a6a6a6"></div>
<div class="b" style="left:976px;top:711px;width:1px;height:16px;background:#fff"></div>
<div class="b" style="left:1046px;top:711px;width:1px;height:16px;background:#a6a6a6"></div>
<div class="b" style="left:1047px;top:711px;width:1px;height:16px;background:#fff"></div>
<div class="b" style="left:1112px;top:711px;width:1px;height:16px;background:#a6a6a6"></div>
<div class="b" style="left:1113px;top:711px;width:1px;height:16px;background:#fff"></div>
<svg class="b" style="left:1118px;top:713px" width="24" height="12" viewBox="0 0 24 12" shape-rendering="crispEdges"><rect x="0" y="0" width="2" height="9" fill="#6b8e23"/><rect x="0" y="9.5" width="2" height="2.5" fill="#c0392b"/><rect x="3" y="0" width="2" height="8.1" fill="#6b8e23"/><rect x="3" y="8.6" width="2" height="3.4" fill="#c0392b"/><rect x="6" y="0" width="2" height="7.2" fill="#6b8e23"/><rect x="6" y="7.7" width="2" height="4.3" fill="#c0392b"/><rect x="9" y="0" width="2" height="6.3" fill="#6b8e23"/><rect x="9" y="6.8" width="2" height="5.2" fill="#c0392b"/><rect x="12" y="0" width="2" height="5.4" fill="#6b8e23"/><rect x="12" y="5.9" width="2" height="6.1" fill="#c0392b"/><rect x="15" y="0" width="2" height="4.5" fill="#6b8e23"/><rect x="15" y="5" width="2" height="7" fill="#c0392b"/><rect x="18" y="0" width="2" height="3.6" fill="#6b8e23"/><rect x="18" y="4.1" width="2" height="7.9" fill="#c0392b"/><rect x="21" y="0" width="2" height="2.7" fill="#6b8e23"/><rect x="21" y="3.2" width="2" height="8.8" fill="#c0392b"/></svg>
<span class="t" style="left:1171.0px;top:711.0px;font-size:12px;line-height:16px;color:#000;transform:scaleX(0.9146);transform-origin:0 50%;">33/1 kb</span>
<svg class="b" style="left:1258px;top:712px" width="15" height="15" viewBox="0 0 15 15" ><path d="M14 2L2 14M14 6L6 14M14 10L10 14" stroke="#a8a8a8" stroke-width="1.300"/><path d="M14 3.300L3.300 14M14 7.300L7.300 14M14 11.300L11.300 14" stroke="#fff" stroke-width="1"/></svg>
</div></body></html>
